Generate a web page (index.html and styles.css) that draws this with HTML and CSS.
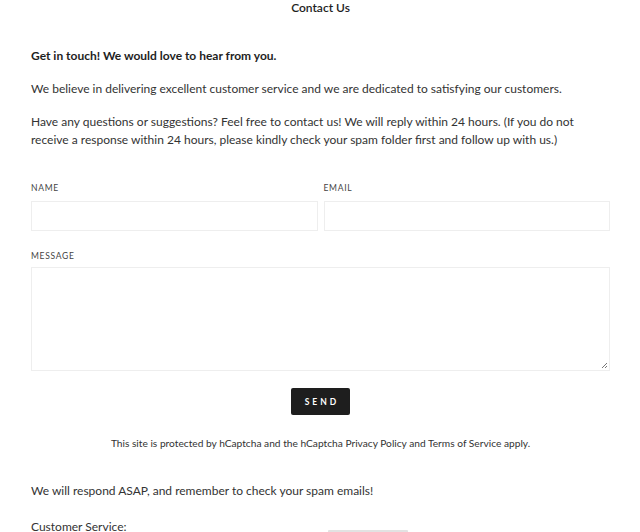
FILE: index.html
```html
<!DOCTYPE html>
<html>
<head>
<meta charset="utf-8">
<link rel="stylesheet" href="styles.css">
</head>
<body>
<div class="page">
  <h1 class="title">Contact Us</h1>
  <p class="lead">Get in touch! We would love to hear from you.</p>
  <p class="para">We believe in delivering excellent customer service and we are dedicated to satisfying our customers.</p>
  <p class="para">Have any questions or suggestions? Feel free to contact us! We will reply within 24 hours. (If you do not receive a response within 24 hours, please kindly check your spam folder first and follow up with us.)</p>
  <form class="form">
    <div class="row">
      <div class="field">
        <label class="label">Name</label>
        <div class="input"></div>
      </div>
      <div class="field">
        <label class="label">Email</label>
        <div class="input"></div>
      </div>
    </div>
    <div class="field msg">
      <label class="label">Message</label>
      <div class="textarea">
        <svg class="grip" width="8" height="8" viewBox="0 0 8 8"><path d="M7 2 L2 7 M7 5 L5 7" stroke="#777" stroke-width="1" fill="none"/></svg>
      </div>
    </div>
    <div class="actions"><button type="button" class="send">SEND</button></div>
  </form>
  <p class="captcha">This site is protected by hCaptcha and the hCaptcha Privacy Policy and Terms of Service apply.</p>
  <p class="para respond">We will respond ASAP, and remember to check your spam emails!</p>
  <div class="cs-row">
    <p class="para cs">Customer Service:</p>
    <div class="bar"></div>
  </div>
</div>
</body>
</html>
```
FILE: styles.css
```css
html, body { margin: 0; padding: 0; background: #fff; }
body { font-family: Lato, "Open Sans", sans-serif; color: #2b2b2b; overflow: hidden; height: 532px; }
.page { padding: 0 30px 0 31px; }
.title { margin: 0; font-size: 12px; font-weight: 600; text-align: center; line-height: 16px; color: #1e1e1e; }
.lead { margin: 31px 0 0; font-size: 12px; font-weight: 700; line-height: 18px; color: #1e1e1e; }
.para { margin: 15px 0 0; font-size: 12px; line-height: 18px; color: #333; }
.form { margin-top: 34px; }
.row { display: flex; gap: 6px; }
.row .field { flex: 1; }
.label { display: block; font-size: 8.5px; letter-spacing: 0.7px; text-transform: uppercase; color: #444; line-height: 10px; margin-bottom: 8px; }
.input { height: 28px; border: 1px solid #eee; }
.msg { margin-top: 20px; }
.msg .label { margin-bottom: 6px; }
.textarea { height: 102px; border: 1px solid #eee; position: relative; }
.grip { position: absolute; right: 1px; bottom: 1px; }
.actions { display: flex; justify-content: center; margin-top: 17px; }
.send { background: #1e1e1e; color: #fff; border: none; border-radius: 2px; width: 59px; height: 27px; font-family: Lato, sans-serif; font-size: 8.5px; font-weight: 700; letter-spacing: 3px; padding: 0 0 0 3px; }
.captcha { margin: 22px 0 0; text-align: center; font-size: 10.2px; line-height: 12px; color: #333; }
.respond { margin-top: 33px; }
.cs-row { display: flex; align-items: flex-start; }
.cs { margin-top: 18px; width: 297px; }
.bar { width: 80px; height: 3px; background: #e2e2e2; border-radius: 1px; margin-top: 30px; }
```
